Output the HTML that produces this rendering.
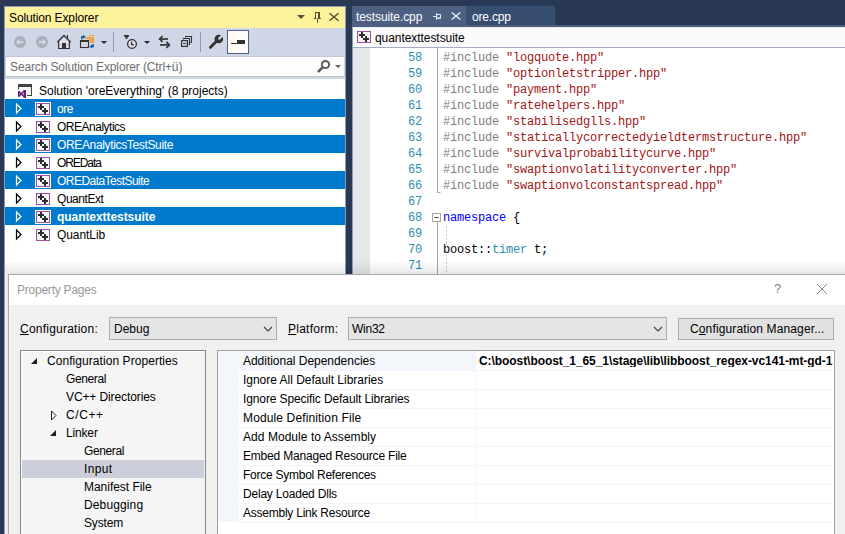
<!DOCTYPE html>
<html><head><meta charset="utf-8">
<style>
*{margin:0;padding:0;box-sizing:border-box}
html,body{width:845px;height:534px;overflow:hidden;background:#293955;position:relative;font-family:"Liberation Sans",sans-serif;font-size:12px}
.a{position:absolute}
.t{position:absolute;white-space:pre;line-height:12px;font-size:12px}
.m{position:absolute;white-space:pre;font-family:"Liberation Mono",monospace;font-size:12px;letter-spacing:-0.2px;line-height:12px}
svg{position:absolute;left:0;top:0;overflow:visible}
</style></head><body>

<div class="a" style="left:4px;top:6px;width:342px;height:528px;background:#8e9bbc"></div>
<div class="a" style="left:5px;top:7px;width:340px;height:21px;background:#fff29d"></div>
<div class="t" style="left:9px;top:12px;color:#000;letter-spacing:-0.125px;">Solution Explorer</div>
<svg width="845" height="60">
 <path d="M297 15h8l-4 4z" fill="#5d5034"/>
 <path d="M314 18.5h7M317.5 19v3.8" stroke="#5d5034" stroke-width="1" fill="none"/>
 <path d="M315 12h5v6.5h-5z" fill="#5d5034"/><rect x="316" y="13" width="2" height="5.5" fill="#fff29d"/>
 <path d="M329.5 13.2l9 7.6M338.5 13.2l-9 7.6" stroke="#5d5034" stroke-width="1.5"/>
</svg>
<div class="a" style="left:5px;top:28px;width:340px;height:51px;background:#cfd6e5"></div>
<svg width="845" height="60">
 <circle cx="20" cy="42" r="6" fill="#a9afbb"/>
 <path d="M17 42h6.5" stroke="#d5dae5" stroke-width="1.8"/><path d="M16 42l3.2-3.2v6.4z" fill="#d5dae5"/>
 <circle cx="42" cy="42" r="6" fill="#a9afbb"/>
 <path d="M38.5 42h6.5" stroke="#d5dae5" stroke-width="1.8"/><path d="M46 42l-3.2-3.2v6.4z" fill="#d5dae5"/>
 <path d="M64 37.2l-5.6 5.3v6h11.2v-6z" fill="#dcdde8"/>
 <path d="M57.3 42.2L64 35.6l6.7 6.6" stroke="#333" stroke-width="1.4" fill="none"/>
 <path d="M58.6 41.6v6.9h10.8v-6.9" stroke="#333" stroke-width="1.2" fill="none"/>
 <rect x="62" y="43" width="4" height="6" fill="#333"/>
 <path d="M67.5 35v3.6" stroke="#333" stroke-width="1.1"/>
 <path d="M85 37h4v-2h5v8h-9z" fill="#e8a84a"/>
 <rect x="90" y="36" width="3" height="1" fill="#f5e3c4"/>
 <rect x="79.5" y="39" width="10" height="9.5" fill="#cfd6e5"/>
 <rect x="80.5" y="40.5" width="8" height="7" fill="#d5d6e3" stroke="#333" stroke-width="1.1"/>
 <rect x="80" y="40" width="9" height="2" fill="#333"/>
 <path d="M81.8 39.2v-2.4h1.6" stroke="#0e5aa7" stroke-width="1.5" fill="none"/>
 <path d="M83 34.8l2.6 2-2.6 2z" fill="#0e5aa7"/>
 <path d="M93.2 44v2.4h-1.6" stroke="#0e5aa7" stroke-width="1.5" fill="none"/>
 <path d="M92 44.4l-2.6 2 2.6 2z" fill="#0e5aa7"/>
 <path d="M101 41h6l-3 3z" fill="#1b2a48"/>
 <rect x="113" y="32" width="1" height="20" fill="#8e9bbc"/>
 <path d="M124 35h5v1.2l-1.6 1.3v1.6h-1.8v-1.6l-1.6-1.3z" fill="#333"/>
 <circle cx="132" cy="44" r="4.4" fill="#dcdde8" stroke="#333" stroke-width="1.3"/>
 <path d="M131.6 41.6v3h2.2" stroke="#333" stroke-width="1.2" fill="none"/>
 <path d="M144 41h6l-3 3z" fill="#1b2a48"/>
 <path d="M159.5 39h8.5" stroke="#333" stroke-width="1.7"/><path d="M162.6 36l-3 3 3 3" stroke="#333" stroke-width="1.7" fill="none"/>
 <path d="M160 44.9h9" stroke="#333" stroke-width="1.7"/><path d="M166.4 41.9l3 3-3 3" stroke="#333" stroke-width="1.7" fill="none"/>
 <path d="M185.5 37.5v-1h6v6h-1" stroke="#333" stroke-width="1.1" fill="none"/>
 <path d="M183.5 39.5v-1h6v6h-1" stroke="#333" stroke-width="1.1" fill="none"/>
 <rect x="181.6" y="40.6" width="5.8" height="5.8" fill="#dcdde8" stroke="#333" stroke-width="1.2"/>
 <path d="M183 43.5h3.2" stroke="#0e5aa7" stroke-width="1.2"/>
 <rect x="200" y="32" width="1" height="20" fill="#8e9bbc"/>
 <path d="M210.5 47.3l6-6" stroke="#333" stroke-width="3" stroke-linecap="round"/>
 <circle cx="218.8" cy="39" r="4.3" fill="#333"/>
 <path d="M219.2 38.6l4.4-4.4" stroke="#cfd6e5" stroke-width="2.2" stroke-linecap="round"/>
 <rect x="227.5" y="30.5" width="21" height="23" fill="#fffcf5" stroke="#4b6290" stroke-width="1"/>
 <rect x="237" y="40" width="8" height="4" fill="#333"/>
 <rect x="231" y="43" width="6" height="1" fill="#333"/>
</svg>
<div class="a" style="left:6px;top:56px;width:338px;height:21px;background:#fdfdfd;border-top:1px solid #bec6d7;border-bottom:1px solid #bec6d7"></div>
<div class="t" style="left:10px;top:61px;color:#6d6d6d;letter-spacing:-0.125px;">Search Solution Explorer (Ctrl+ü)</div>
<svg width="845" height="80">
 <circle cx="325.5" cy="64.5" r="3.6" fill="none" stroke="#5f5f5f" stroke-width="2"/>
 <path d="M322.8 67.2l-4.8 4.8" stroke="#5f5f5f" stroke-width="2.6"/>
 <path d="M335 65h6l-3 3z" fill="#5f5f5f"/>
</svg>
<div class="a" style="left:5px;top:79px;width:340px;height:455px;background:#fff"></div>
<div class="t" style="left:39px;top:85px;color:#000;">Solution 'oreEverything' (8 projects)</div>
<svg width="345" height="100">
 <rect x="19" y="87" width="12" height="8" fill="#f3f3f3"/>
 <rect x="18" y="84" width="14" height="3" fill="#424242"/>
 <rect x="18" y="87" width="1" height="3" fill="#424242"/>
 <rect x="31" y="87" width="1" height="9" fill="#424242"/>
 <rect x="27" y="95" width="5" height="1" fill="#424242"/>
 <rect x="17.5" y="89.5" width="9.5" height="9" fill="#fff"/>
 <path d="M18.8 91v5.8" stroke="#68217a" stroke-width="1.6"/>
 <path d="M24.8 90v8" stroke="#68217a" stroke-width="2.4"/>
 <path d="M18.8 91.4l5.6 5.6M18.8 96.4l5.6-5.6" stroke="#68217a" stroke-width="1.5"/>
</svg>
<div class="a" style="left:5px;top:99px;width:340px;height:18px;background:#007acc"></div>
<svg width="60" height="117"><path d="M16.5 104v9l4.5-4.5z" fill="none" stroke="#fff" stroke-width="1.2"/><rect x="35" y="102" width="16" height="14" fill="#fff"/><rect x="36" y="103" width="14" height="12" fill="#9b4f9f"/><rect x="37" y="104" width="12" height="10" fill="#f6f6f6"/><path d="M38 106h6v2h-6zM40 104h2v6h-2zM42 110h6v2h-6zM44 108h2v6h-2z" fill="#2d2d2d"/></svg>
<div class="t" style="left:57px;top:103px;color:#fff;letter-spacing:-0.5px;">ore</div>
<svg width="60" height="135"><path d="M16.5 122v9l4.5-4.5z" fill="none" stroke="#000" stroke-width="1.2"/><rect x="36" y="121" width="14" height="12" fill="#9b4f9f"/><rect x="37" y="122" width="12" height="10" fill="#f6f6f6"/><path d="M38 124h6v2h-6zM40 122h2v6h-2zM42 128h6v2h-6zM44 126h2v6h-2z" fill="#2d2d2d"/></svg>
<div class="t" style="left:57px;top:121px;color:#000;letter-spacing:-0.491px;">OREAnalytics</div>
<div class="a" style="left:5px;top:135px;width:340px;height:18px;background:#007acc"></div>
<svg width="60" height="153"><path d="M16.5 140v9l4.5-4.5z" fill="none" stroke="#fff" stroke-width="1.2"/><rect x="35" y="138" width="16" height="14" fill="#fff"/><rect x="36" y="139" width="14" height="12" fill="#9b4f9f"/><rect x="37" y="140" width="12" height="10" fill="#f6f6f6"/><path d="M38 142h6v2h-6zM40 140h2v6h-2zM42 146h6v2h-6zM44 144h2v6h-2z" fill="#2d2d2d"/></svg>
<div class="t" style="left:57px;top:139px;color:#fff;letter-spacing:-0.35px;">OREAnalyticsTestSuite</div>
<svg width="60" height="171"><path d="M16.5 158v9l4.5-4.5z" fill="none" stroke="#000" stroke-width="1.2"/><rect x="36" y="157" width="14" height="12" fill="#9b4f9f"/><rect x="37" y="158" width="12" height="10" fill="#f6f6f6"/><path d="M38 160h6v2h-6zM40 158h2v6h-2zM42 164h6v2h-6zM44 162h2v6h-2z" fill="#2d2d2d"/></svg>
<div class="t" style="left:57px;top:157px;color:#000;letter-spacing:-1.083px;">OREData</div>
<div class="a" style="left:5px;top:171px;width:340px;height:18px;background:#007acc"></div>
<svg width="60" height="189"><path d="M16.5 176v9l4.5-4.5z" fill="none" stroke="#fff" stroke-width="1.2"/><rect x="35" y="174" width="16" height="14" fill="#fff"/><rect x="36" y="175" width="14" height="12" fill="#9b4f9f"/><rect x="37" y="176" width="12" height="10" fill="#f6f6f6"/><path d="M38 178h6v2h-6zM40 176h2v6h-2zM42 182h6v2h-6zM44 180h2v6h-2z" fill="#2d2d2d"/></svg>
<div class="t" style="left:57px;top:175px;color:#fff;letter-spacing:-0.533px;">OREDataTestSuite</div>
<svg width="60" height="207"><path d="M16.5 194v9l4.5-4.5z" fill="none" stroke="#000" stroke-width="1.2"/><rect x="36" y="193" width="14" height="12" fill="#9b4f9f"/><rect x="37" y="194" width="12" height="10" fill="#f6f6f6"/><path d="M38 196h6v2h-6zM40 194h2v6h-2zM42 200h6v2h-6zM44 198h2v6h-2z" fill="#2d2d2d"/></svg>
<div class="t" style="left:57px;top:193px;color:#000;letter-spacing:-0.457px;">QuantExt</div>
<div class="a" style="left:5px;top:207px;width:340px;height:18px;background:#007acc"></div>
<svg width="60" height="225"><path d="M16.5 212v9l4.5-4.5z" fill="none" stroke="#fff" stroke-width="1.2"/><rect x="35" y="210" width="16" height="14" fill="#fff"/><rect x="36" y="211" width="14" height="12" fill="#9b4f9f"/><rect x="37" y="212" width="12" height="10" fill="#f6f6f6"/><path d="M38 214h6v2h-6zM40 212h2v6h-2zM42 218h6v2h-6zM44 216h2v6h-2z" fill="#2d2d2d"/></svg>
<div class="t" style="left:57px;top:211px;color:#fff;font-weight:bold;letter-spacing:-0.062px;">quantexttestsuite</div>
<svg width="60" height="243"><path d="M16.5 230v9l4.5-4.5z" fill="none" stroke="#000" stroke-width="1.2"/><rect x="36" y="229" width="14" height="12" fill="#9b4f9f"/><rect x="37" y="230" width="12" height="10" fill="#f6f6f6"/><path d="M38 232h6v2h-6zM40 230h2v6h-2zM42 236h6v2h-6zM44 234h2v6h-2z" fill="#2d2d2d"/></svg>
<div class="t" style="left:57px;top:229px;color:#000;letter-spacing:-0.071px;">QuantLib</div>
<div class="a" style="left:352px;top:6px;width:114px;height:21px;background:#4d6082"></div>
<div class="a" style="left:466px;top:6px;width:89px;height:19px;background:#364e6f"></div>
<div class="a" style="left:352px;top:25px;width:493px;height:2px;background:#4d6082"></div>
<div class="t" style="left:356px;top:11px;color:#fff;letter-spacing:-0.083px;">testsuite.cpp</div>
<div class="t" style="left:472px;top:11px;color:#fff;letter-spacing:-0.167px;">ore.cpp</div>
<svg width="845" height="30">
 <rect x="433" y="16" width="3" height="1" fill="#e6e9f0"/>
 <rect x="436" y="13" width="1" height="7" fill="#e6e9f0"/>
 <path d="M437 14.5h3.5v3.5h-3.5" stroke="#e6e9f0" stroke-width="1" fill="none"/>
 <rect x="437" y="17.5" width="4" height="1.2" fill="#e6e9f0"/>
 <path d="M451.8 12.5l8.5 7M460.2 12.5l-8.5 7" stroke="#e6e9f0" stroke-width="1.5"/>
</svg>
<div class="a" style="left:352px;top:27px;width:493px;height:21px;background:#fafafa;border-top:1px solid #e8ecf3;border-left:1px solid #8e9bbc;border-bottom:1px solid #a3adc4"></div>
<svg width="845" height="60">
 <rect x="357" y="31" width="14" height="12" fill="#9b4f9f"/><rect x="358" y="32" width="12" height="10" fill="#f6f6f6"/>
 <path d="M359 34h6v2h-6zM361 32h2v6h-2zM363 38h6v2h-6zM365 36h2v6h-2z" fill="#2d2d2d"/>
</svg>
<div class="t" style="left:375px;top:32px;color:#000;letter-spacing:-0.062px;">quantexttestsuite</div>
<div class="a" style="left:352px;top:48px;width:1px;height:230px;background:#8e9bbc"></div>
<div class="a" style="left:353px;top:48px;width:17px;height:230px;background:#e6e7e8"></div>
<div class="a" style="left:370px;top:48px;width:475px;height:230px;background:#fff"></div>
<div class="m" style="left:394px;width:28px;text-align:right;top:52px;color:#2b91af">58</div>
<div class="m" style="left:443px;top:52px;color:#808080">#include <span style="color:#a31515">"logquote.hpp"</span></div>
<div class="m" style="left:394px;width:28px;text-align:right;top:68px;color:#2b91af">59</div>
<div class="m" style="left:443px;top:68px;color:#808080">#include <span style="color:#a31515">"optionletstripper.hpp"</span></div>
<div class="m" style="left:394px;width:28px;text-align:right;top:84px;color:#2b91af">60</div>
<div class="m" style="left:443px;top:84px;color:#808080">#include <span style="color:#a31515">"payment.hpp"</span></div>
<div class="m" style="left:394px;width:28px;text-align:right;top:100px;color:#2b91af">61</div>
<div class="m" style="left:443px;top:100px;color:#808080">#include <span style="color:#a31515">"ratehelpers.hpp"</span></div>
<div class="m" style="left:394px;width:28px;text-align:right;top:116px;color:#2b91af">62</div>
<div class="m" style="left:443px;top:116px;color:#808080">#include <span style="color:#a31515">"stabilisedglls.hpp"</span></div>
<div class="m" style="left:394px;width:28px;text-align:right;top:132px;color:#2b91af">63</div>
<div class="m" style="left:443px;top:132px;color:#808080">#include <span style="color:#a31515">"staticallycorrectedyieldtermstructure.hpp"</span></div>
<div class="m" style="left:394px;width:28px;text-align:right;top:148px;color:#2b91af">64</div>
<div class="m" style="left:443px;top:148px;color:#808080">#include <span style="color:#a31515">"survivalprobabilitycurve.hpp"</span></div>
<div class="m" style="left:394px;width:28px;text-align:right;top:164px;color:#2b91af">65</div>
<div class="m" style="left:443px;top:164px;color:#808080">#include <span style="color:#a31515">"swaptionvolatilityconverter.hpp"</span></div>
<div class="m" style="left:394px;width:28px;text-align:right;top:180px;color:#2b91af">66</div>
<div class="m" style="left:443px;top:180px;color:#808080">#include <span style="color:#a31515">"swaptionvolconstantspread.hpp"</span></div>
<div class="m" style="left:394px;width:28px;text-align:right;top:196px;color:#2b91af">67</div>
<div class="m" style="left:394px;width:28px;text-align:right;top:212px;color:#2b91af">68</div>
<div class="m" style="left:443px;top:212px;color:#000"><span style="color:#0000ff">namespace</span> {</div>
<div class="m" style="left:394px;width:28px;text-align:right;top:228px;color:#2b91af">69</div>
<div class="m" style="left:394px;width:28px;text-align:right;top:244px;color:#2b91af">70</div>
<div class="m" style="left:443px;top:244px;color:#000">boost::<span style="color:#2b91af">timer</span> t;</div>
<div class="m" style="left:394px;width:28px;text-align:right;top:260px;color:#2b91af">71</div>
<svg width="845" height="280">
 <path d="M437.5 48v144.5h3" stroke="#a5a5a5" stroke-width="1" fill="none"/>
 <rect x="432.5" y="213.5" width="8" height="8" fill="#fff" stroke="#a5a5a5" stroke-width="1"/>
 <path d="M434.5 217.5h4" stroke="#444" stroke-width="1"/>
 <path d="M437.5 222v52" stroke="#a5a5a5" stroke-width="1"/>
 <path d="M446.5 226v48" stroke="#c8c8c8" stroke-width="1" stroke-dasharray="2 2"/>
</svg>
<div class="a" style="left:5px;top:260px;width:840px;height:14px;background:linear-gradient(to bottom,rgba(0,0,0,0),rgba(0,0,0,0.09))"></div>
<div class="a" style="left:5px;top:274px;width:3px;height:260px;background:linear-gradient(to right,rgba(0,0,0,0.04),rgba(0,0,0,0.10))"></div>
<div class="a" style="left:8px;top:274px;width:837px;height:260px;background:#f0f0f0;border-top:1px solid #a9a9a9;border-left:1px solid #a9a9a9"></div>
<div class="a" style="left:9px;top:275px;width:836px;height:30px;background:#fff"></div>
<div class="t" style="left:17px;top:284px;color:#999;letter-spacing:-0.231px;">Property Pages</div>
<div class="t" style="left:774px;top:283px;color:#808080;font-size:13px">?</div>
<svg width="845" height="534"><path d="M817 284l10 10M827 284l-10 10" stroke="#8a8a8a" stroke-width="1"/></svg>
<div class="t" style="left:20px;top:323px;color:#000;letter-spacing:0.231px;"><u>C</u>onfiguration:</div>
<div class="a" style="left:109px;top:317px;width:168px;height:23px;background:#e5e5e5;border:1px solid #adadad"></div>
<div class="t" style="left:114px;top:323px;color:#000;">Debug</div>
<div class="t" style="left:288px;top:323px;color:#000;letter-spacing:0.25px;"><u>P</u>latform:</div>
<div class="a" style="left:348px;top:317px;width:319px;height:23px;background:#e5e5e5;border:1px solid #adadad"></div>
<div class="t" style="left:352px;top:323px;color:#000;letter-spacing:-0.25px;">Win32</div>
<svg width="845" height="534">
 <path d="M264 327l4 4 4-4" stroke="#444" stroke-width="1.2" fill="none"/>
 <path d="M654 327l4 4 4-4" stroke="#444" stroke-width="1.2" fill="none"/>
</svg>
<div class="a" style="left:678px;top:318px;width:156px;height:22px;background:#e1e1e1;border:1px solid #adadad"></div>
<div class="t" style="left:690px;top:323px;color:#000;letter-spacing:0.13px;">C<u>o</u>nfiguration Manager...</div>
<div class="a" style="left:20px;top:350px;width:186px;height:200px;background:#f5f5f5;border:1px solid #828790;box-shadow:inset 1px 1px 0 #fff"></div>
<div class="a" style="left:22px;top:460px;width:182px;height:18px;background:#cccedb"></div>
<div class="t" style="left:47px;top:355px;color:#000;letter-spacing:0.061px;">Configuration Properties</div>
<svg width="210" height="534"><path d="M37 358v6h-6z" fill="#1e1e1e"/></svg>
<div class="t" style="left:66px;top:373px;color:#000;letter-spacing:-0.383px;">General</div>
<div class="t" style="left:66px;top:391px;color:#000;letter-spacing:-0.107px;">VC++ Directories</div>
<div class="t" style="left:66px;top:409px;color:#000;letter-spacing:0.6px;">C/C++</div>
<svg width="210" height="534"><path d="M51.5 411v9l4.5-4.5z" fill="none" stroke="#1e1e1e" stroke-width="1"/></svg>
<div class="t" style="left:66px;top:427px;color:#000;letter-spacing:-0.16px;">Linker</div>
<svg width="210" height="534"><path d="M56 430v6h-6z" fill="#1e1e1e"/></svg>
<div class="t" style="left:84px;top:445px;color:#000;letter-spacing:-0.383px;">General</div>
<div class="t" style="left:84px;top:463px;color:#000;letter-spacing:0.325px;">Input</div>
<div class="t" style="left:84px;top:481px;color:#000;letter-spacing:-0.033px;">Manifest File</div>
<div class="t" style="left:84px;top:499px;color:#000;letter-spacing:0.125px;">Debugging</div>
<div class="t" style="left:84px;top:517px;color:#000;letter-spacing:-0.14px;">System</div>
<div class="a" style="left:217px;top:350px;width:618px;height:200px;background:#fff;border:1px solid #a0a0a0"></div>
<div class="a" style="left:218px;top:351px;width:21px;height:171px;background:#f3f6fb"></div>
<div class="a" style="left:239px;top:351px;width:236px;height:19px;background:#f3f6fb"></div>
<div class="t" style="left:243px;top:355px;color:#000;letter-spacing:-0.027px;">Additional Dependencies</div>
<div class="a" style="left:239px;top:370px;width:594px;height:1px;background:#f2f4fb"></div>
<div class="t" style="left:243px;top:374px;color:#000;letter-spacing:-0.019px;">Ignore All Default Libraries</div>
<div class="a" style="left:239px;top:389px;width:594px;height:1px;background:#f2f4fb"></div>
<div class="t" style="left:243px;top:393px;color:#000;letter-spacing:-0.109px;">Ignore Specific Default Libraries</div>
<div class="a" style="left:239px;top:408px;width:594px;height:1px;background:#f2f4fb"></div>
<div class="t" style="left:243px;top:412px;color:#000;letter-spacing:0.133px;">Module Definition File</div>
<div class="a" style="left:239px;top:427px;width:594px;height:1px;background:#f2f4fb"></div>
<div class="t" style="left:243px;top:431px;color:#000;letter-spacing:0.048px;">Add Module to Assembly</div>
<div class="a" style="left:239px;top:446px;width:594px;height:1px;background:#f2f4fb"></div>
<div class="t" style="left:243px;top:450px;color:#000;letter-spacing:-0.192px;">Embed Managed Resource File</div>
<div class="a" style="left:239px;top:465px;width:594px;height:1px;background:#f2f4fb"></div>
<div class="t" style="left:243px;top:469px;color:#000;letter-spacing:-0.255px;">Force Symbol References</div>
<div class="a" style="left:239px;top:484px;width:594px;height:1px;background:#f2f4fb"></div>
<div class="t" style="left:243px;top:488px;color:#000;letter-spacing:-0.206px;">Delay Loaded Dlls</div>
<div class="a" style="left:239px;top:503px;width:594px;height:1px;background:#f2f4fb"></div>
<div class="t" style="left:243px;top:507px;color:#000;letter-spacing:-0.238px;">Assembly Link Resource</div>
<div class="a" style="left:239px;top:522px;width:594px;height:1px;background:#f2f4fb"></div>
<div class="a" style="left:475px;top:351px;width:1px;height:171px;background:#f2f4fb"></div>
<div class="t" style="left:479px;top:355px;color:#000;font-weight:bold;letter-spacing:-0.068px;width:355px;overflow:hidden;">C:\boost\boost_1_65_1\stage\lib\libboost_regex-vc141-mt-gd-1</div>
</body></html>
